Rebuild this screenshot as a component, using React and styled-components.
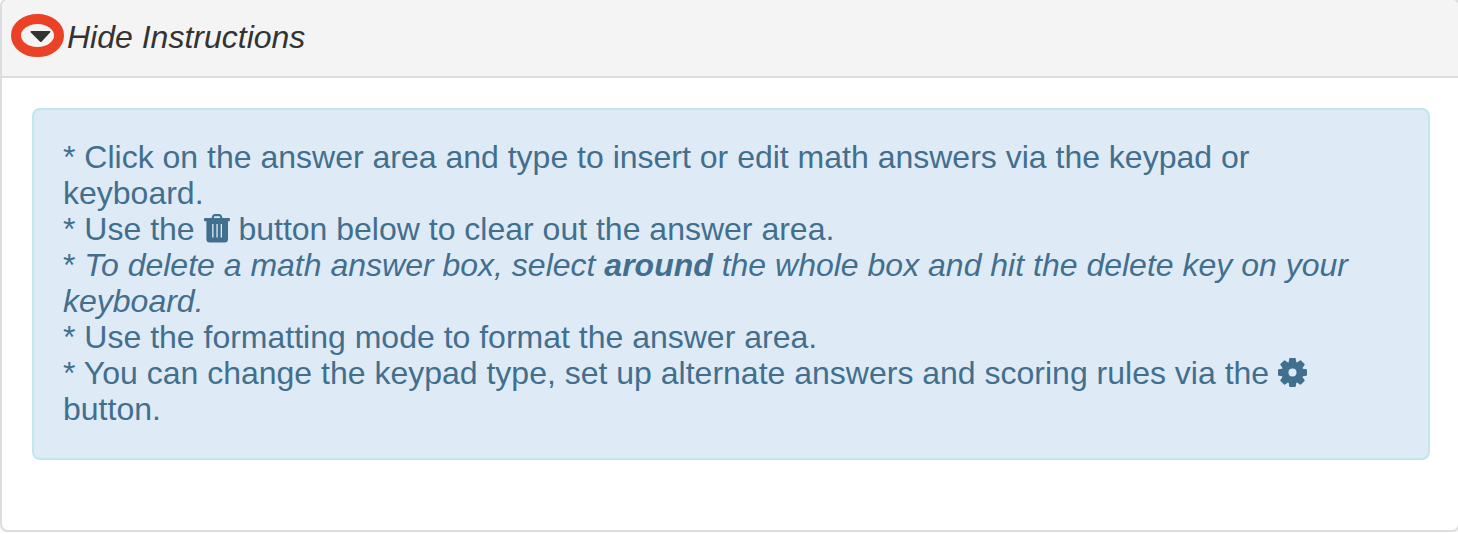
import React, { useState } from "react";
import styled, { createGlobalStyle } from "styled-components";

const GlobalStyle = createGlobalStyle`
  *, *::before, *::after { box-sizing: border-box; }
  body {
    margin: 0;
    background: #fff;
    color: #333;
    font-family: "Liberation Sans", Arial, Helvetica, sans-serif;
    font-size: 32px;
    line-height: 36px;
    overflow-x: hidden;
  }
`;

const Panel = styled.section`
  margin: -2px -2px 0 0;
  border: 2px solid #ddd;
  border-radius: 8px;
  background: #fff;
  box-shadow: 0 2px 2px rgba(0, 0, 0, 0.05);
  overflow: hidden;
`;

const PanelHeader = styled.header`
  padding: 14px 9px 19px;
  border-bottom: 2px solid #ddd;
  background: #f4f4f4;
`;

const ToggleButton = styled.button`
  display: flex;
  align-items: center;
  gap: 3px;
  padding: 0;
  border: 0;
  background: none;
  color: inherit;
  font: inherit;
  font-style: italic;
  cursor: pointer;
`;

const ToggleLabel = styled.span`
  padding-top: 2px;
`;

const CaretMark = styled.svg`
  display: block;
  flex: none;
  width: 53px;
  height: 43px;
`;

const PanelBody = styled.div`
  padding: 30px 28px 70px 30px;
`;

const InfoBox = styled.div`
  padding: 29px 30px 31px 29px;
  border: 2px solid #c0e6ef;
  border-radius: 8px;
  background: #deebf6;
  color: #426f8e;
`;

const Instruction = styled.p`
  margin: 0;
`;

const InlineIcon = styled.svg`
  display: inline-block;
  width: ${({ $width }) => $width}px;
  height: 30px;
  vertical-align: -4px;
`;

function TrashIcon() {
  return (
    <InlineIcon $width={26} viewBox="0 0 26 30" role="img" aria-label="trash">
      <path
        fill="currentColor"
        fillRule="evenodd"
        d="M7.500 4 8.400 1.500Q9 0 10.600 0h4.800Q17 0 17.600 1.500L18.500 4H25q1 0 1 1v1.200q0 1-1 1h-1V25q0 3.600-3.200 3.600H5.600Q2.400 28.600 2.400 25V7.200H1q-1 0-1-1V5q0-1 1-1ZM9.700 4h6.600l-.6-1.700h-5.400ZM8.200 10v13.500h1.300V10ZM12.400 10v13.500h1.300V10ZM16.700 10v13.500H18V10Z"
      />
    </InlineIcon>
  );
}

function GearIcon() {
  return (
    <InlineIcon $width={29} viewBox="0 0 29 30" role="img" aria-label="settings">
      <g fill="currentColor" transform="translate(14.500 14.500)">
        {[0, 45, 90, 135].map((angle) => (
          <path
            key={angle}
            transform={`rotate(${angle})`}
            d="M-2.500-14.500h5q.7 0 .8.700L4-9V9l-.7 4.800q-.1.700-.8.700h-5q-.7 0-.8-.7L-4 9V-9l.7-4.800q.1-.7.8-.7Z"
          />
        ))}
        <circle r="10.800" />
        <circle r="4" fill="#deebf6" />
      </g>
    </InlineIcon>
  );
}

export default function App() {
  const [open, setOpen] = useState(true);
  return (
    <>
      <GlobalStyle />
      <Panel>
        <PanelHeader>
          <ToggleButton
            type="button"
            aria-expanded={open}
            aria-controls="instructions"
            onClick={() => setOpen(!open)}
          >
            <CaretMark viewBox="0 0 53 43" aria-hidden="true">
              <ellipse cx="26.500" cy="21.500" rx="21.500" ry="16.500" fill="none" stroke="#eb4126" strokeWidth="10" />
              <path fill="#333" d="M20.500 17h17.800q2 0 .8 1.500l-8.300 9q-1 1.100-2 0l-9-9q-1.200-1.500.7-1.500Z" />
            </CaretMark>
            <ToggleLabel>{open ? "Hide Instructions" : "Show Instructions"}</ToggleLabel>
          </ToggleButton>
        </PanelHeader>
        {open && (
          <PanelBody id="instructions">
            <InfoBox>
              <Instruction>
                * Click on the answer area and type to insert or edit math answers via the keypad or keyboard.
              </Instruction>
              <Instruction>
                * Use the <TrashIcon /> button below to clear out the answer area.
              </Instruction>
              <Instruction>
                *{" "}
                <em>
                  To delete a math answer box, select <strong>around</strong> the whole box and hit the delete key on
                  your keyboard.
                </em>
              </Instruction>
              <Instruction>* Use the formatting mode to format the answer area.</Instruction>
              <Instruction>
                * You can change the keypad type, set up alternate answers and scoring rules via the <GearIcon />{" "}
                button.
              </Instruction>
            </InfoBox>
          </PanelBody>
        )}
      </Panel>
    </>
  );
}
